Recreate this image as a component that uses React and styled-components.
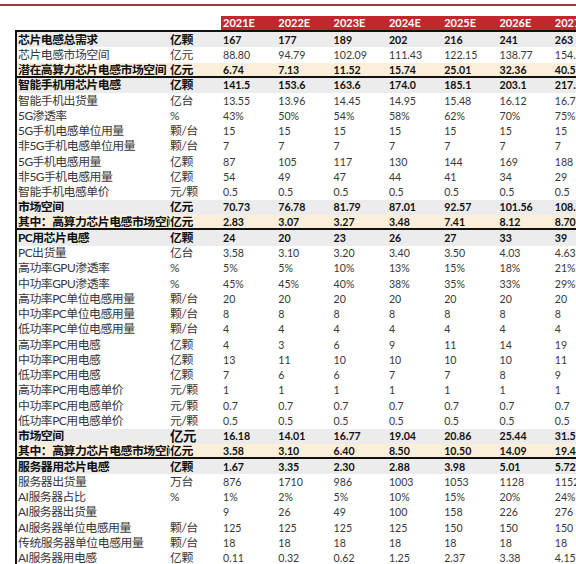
import styled, { createGlobalStyle } from "styled-components"

const GlobalStyle = createGlobalStyle`
    html, body {
        margin: 0;
        padding: 0;
        background: #ffffff;
        overflow: hidden;
    }
`

const COLS = "153px 51px repeat(7, 55.3px)"

const Page = styled.div`
    width: 576px;
    height: 564px;
    overflow: hidden;
    padding-top: 4px;
    box-sizing: border-box;
    font-family: "Lato", "Noto Sans CJK SC", sans-serif;
`
const TopRule = styled.div`
    width: 100%;
    height: 2px;
    background: #a2383b;
`
const HeaderRow = styled.div`
    display: grid;
    grid-template-columns: ${COLS};
    margin: 10px 0 0 17px;
    height: 14px;
    width: max-content;
`
const YearCell = styled.div`
    background: #c1272d;
    color: #ffffff;
    font-weight: 700;
    font-size: 11px;
    line-height: 14px;
    padding-left: 2px;
`
const Table = styled.div`
    margin-left: 15px;
    border-left: 2px solid #111;
    border-top: 2px solid #111;
    width: max-content;
`
const Row = styled.div`
    display: grid;
    grid-template-columns: ${COLS};
    box-sizing: border-box;
    height: 15.26px;
    align-items: center;
    background: ${p => p.$tone === "gray" ? "#ececec" : p.$tone === "beige" ? "#fbefd9" : "#ffffff"};
    border-bottom: ${p => p.$sep ? "2px solid #111" : "none"};
    color: ${p => p.$bold ? "#111" : "#383838"};
    font-weight: ${p => p.$bold ? 700 : 400};
`
const Label = styled.div`
    font-size: 11.9px;
    letter-spacing: -0.5px;
    line-height: 14px;
    padding-left: 1px;
    white-space: nowrap;
    overflow: hidden;
`
const Unit = styled.div`
    font-size: ${p => p.$big ? "13.4px" : "11.9px"};
    letter-spacing: -0.5px;
    line-height: 14px;
    white-space: nowrap;
`
const Value = styled.div`
    font-size: 10.6px;
    line-height: 14px;
    padding-left: 2px;
    white-space: nowrap;
`

const years = ["2021E", "2022E", "2023E", "2024E", "2025E", "2026E", "2027E"]

const rows = [
    { l: "芯片电感总需求", u: "亿颗", v: ["167", "177", "189", "202", "216", "241", "263"], bold: true, tone: "gray" },
    { l: "芯片电感市场空间", u: "亿元", v: ["88.80", "94.79", "102.09", "111.43", "122.15", "138.77", "154.31"] },
    { l: "潜在高算力芯片电感市场空间", u: "亿元", v: ["6.74", "7.13", "11.52", "15.74", "25.01", "32.36", "40.58"], bold: true, tone: "beige", sep: true },
    { l: "智能手机用芯片电感", u: "亿颗", v: ["141.5", "153.6", "163.6", "174.0", "185.1", "203.1", "217.9"], bold: true, tone: "gray" },
    { l: "智能手机出货量", u: "亿台", v: ["13.55", "13.96", "14.45", "14.95", "15.48", "16.12", "16.73"] },
    { l: "5G渗透率", u: "%", v: ["43%", "50%", "54%", "58%", "62%", "70%", "75%"] },
    { l: "5G手机电感单位用量", u: "颗/台", v: ["15", "15", "15", "15", "15", "15", "15"] },
    { l: "非5G手机电感单位用量", u: "颗/台", v: ["7", "7", "7", "7", "7", "7", "7"] },
    { l: "5G手机电感用量", u: "亿颗", v: ["87", "105", "117", "130", "144", "169", "188"] },
    { l: "非5G手机电感用量", u: "亿颗", v: ["54", "49", "47", "44", "41", "34", "29"] },
    { l: "智能手机电感单价", u: "元/颗", v: ["0.5", "0.5", "0.5", "0.5", "0.5", "0.5", "0.5"] },
    { l: "市场空间", u: "亿元", v: ["70.73", "76.78", "81.79", "87.01", "92.57", "101.56", "108.73"], bold: true, tone: "gray" },
    { l: "其中：高算力芯片电感市场空间", u: "亿元", v: ["2.83", "3.07", "3.27", "3.48", "7.41", "8.12", "8.70"], bold: true, tone: "beige", sep: true },
    { l: "PC用芯片电感", u: "亿颗", v: ["24", "20", "23", "26", "27", "33", "39"], bold: true, tone: "gray" },
    { l: "PC出货量", u: "亿台", v: ["3.58", "3.10", "3.20", "3.40", "3.50", "4.03", "4.63"] },
    { l: "高功率GPU渗透率", u: "%", v: ["5%", "5%", "10%", "13%", "15%", "18%", "21%"] },
    { l: "中功率GPU渗透率", u: "%", v: ["45%", "45%", "40%", "38%", "35%", "33%", "29%"] },
    { l: "高功率PC单位电感用量", u: "颗/台", v: ["20", "20", "20", "20", "20", "20", "20"] },
    { l: "中功率PC单位电感用量", u: "颗/台", v: ["8", "8", "8", "8", "8", "8", "8"] },
    { l: "低功率PC单位电感用量", u: "颗/台", v: ["4", "4", "4", "4", "4", "4", "4"] },
    { l: "高功率PC用电感", u: "亿颗", v: ["4", "3", "6", "9", "11", "14", "19"] },
    { l: "中功率PC用电感", u: "亿颗", v: ["13", "11", "10", "10", "10", "10", "11"] },
    { l: "低功率PC用电感", u: "亿颗", v: ["7", "6", "6", "7", "7", "8", "9"] },
    { l: "高功率PC用电感单价", u: "元/颗", v: ["1", "1", "1", "1", "1", "1", "1"] },
    { l: "中功率PC用电感单价", u: "元/颗", v: ["0.7", "0.7", "0.7", "0.7", "0.7", "0.7", "0.7"] },
    { l: "低功率PC用电感单价", u: "元/颗", v: ["0.5", "0.5", "0.5", "0.5", "0.5", "0.5", "0.5"] },
    { l: "市场空间", u: "亿元", v: ["16.18", "14.01", "16.77", "19.04", "20.86", "25.44", "31.59"], bold: true, tone: "gray", bigUnit: true },
    { l: "其中：高算力芯片电感市场空间", u: "亿元", v: ["3.58", "3.10", "6.40", "8.50", "10.50", "14.09", "19.44"], bold: true, tone: "beige", sep: true },
    { l: "服务器用芯片电感", u: "亿颗", v: ["1.67", "3.35", "2.30", "2.88", "3.98", "5.01", "5.72"], bold: true, tone: "gray" },
    { l: "服务器出货量", u: "万台", v: ["876", "1710", "986", "1003", "1053", "1128", "1152"] },
    { l: "AI服务器占比", u: "%", v: ["1%", "2%", "5%", "10%", "15%", "20%", "24%"] },
    { l: "AI服务器出货量", u: "", v: ["9", "26", "49", "100", "158", "226", "276"] },
    { l: "AI服务器单位电感用量", u: "颗/台", v: ["125", "125", "125", "125", "150", "150", "150"] },
    { l: "传统服务器单位电感用量", u: "颗/台", v: ["18", "18", "18", "18", "18", "18", "18"] },
    { l: "AI服务器用电感", u: "亿颗", v: ["0.11", "0.32", "0.62", "1.25", "2.37", "3.38", "4.15"] },
]

export default function App() {
  return (
    <Page>
        <GlobalStyle />
        <TopRule />
        <HeaderRow>
            <div />
            <div />
            {years.map(y => <YearCell key={y}>{y}</YearCell>)}
        </HeaderRow>
        <Table>
            {rows.map((r, i) => (
                <Row key={i} $bold={r.bold} $tone={r.tone} $sep={r.sep}>
                    <Label>{r.l}</Label>
                    <Unit $big={r.bigUnit}>{r.u}</Unit>
                    {r.v.map((v, j) => <Value key={j}>{v}</Value>)}
                </Row>
            ))}
        </Table>
    </Page>
  )
}
